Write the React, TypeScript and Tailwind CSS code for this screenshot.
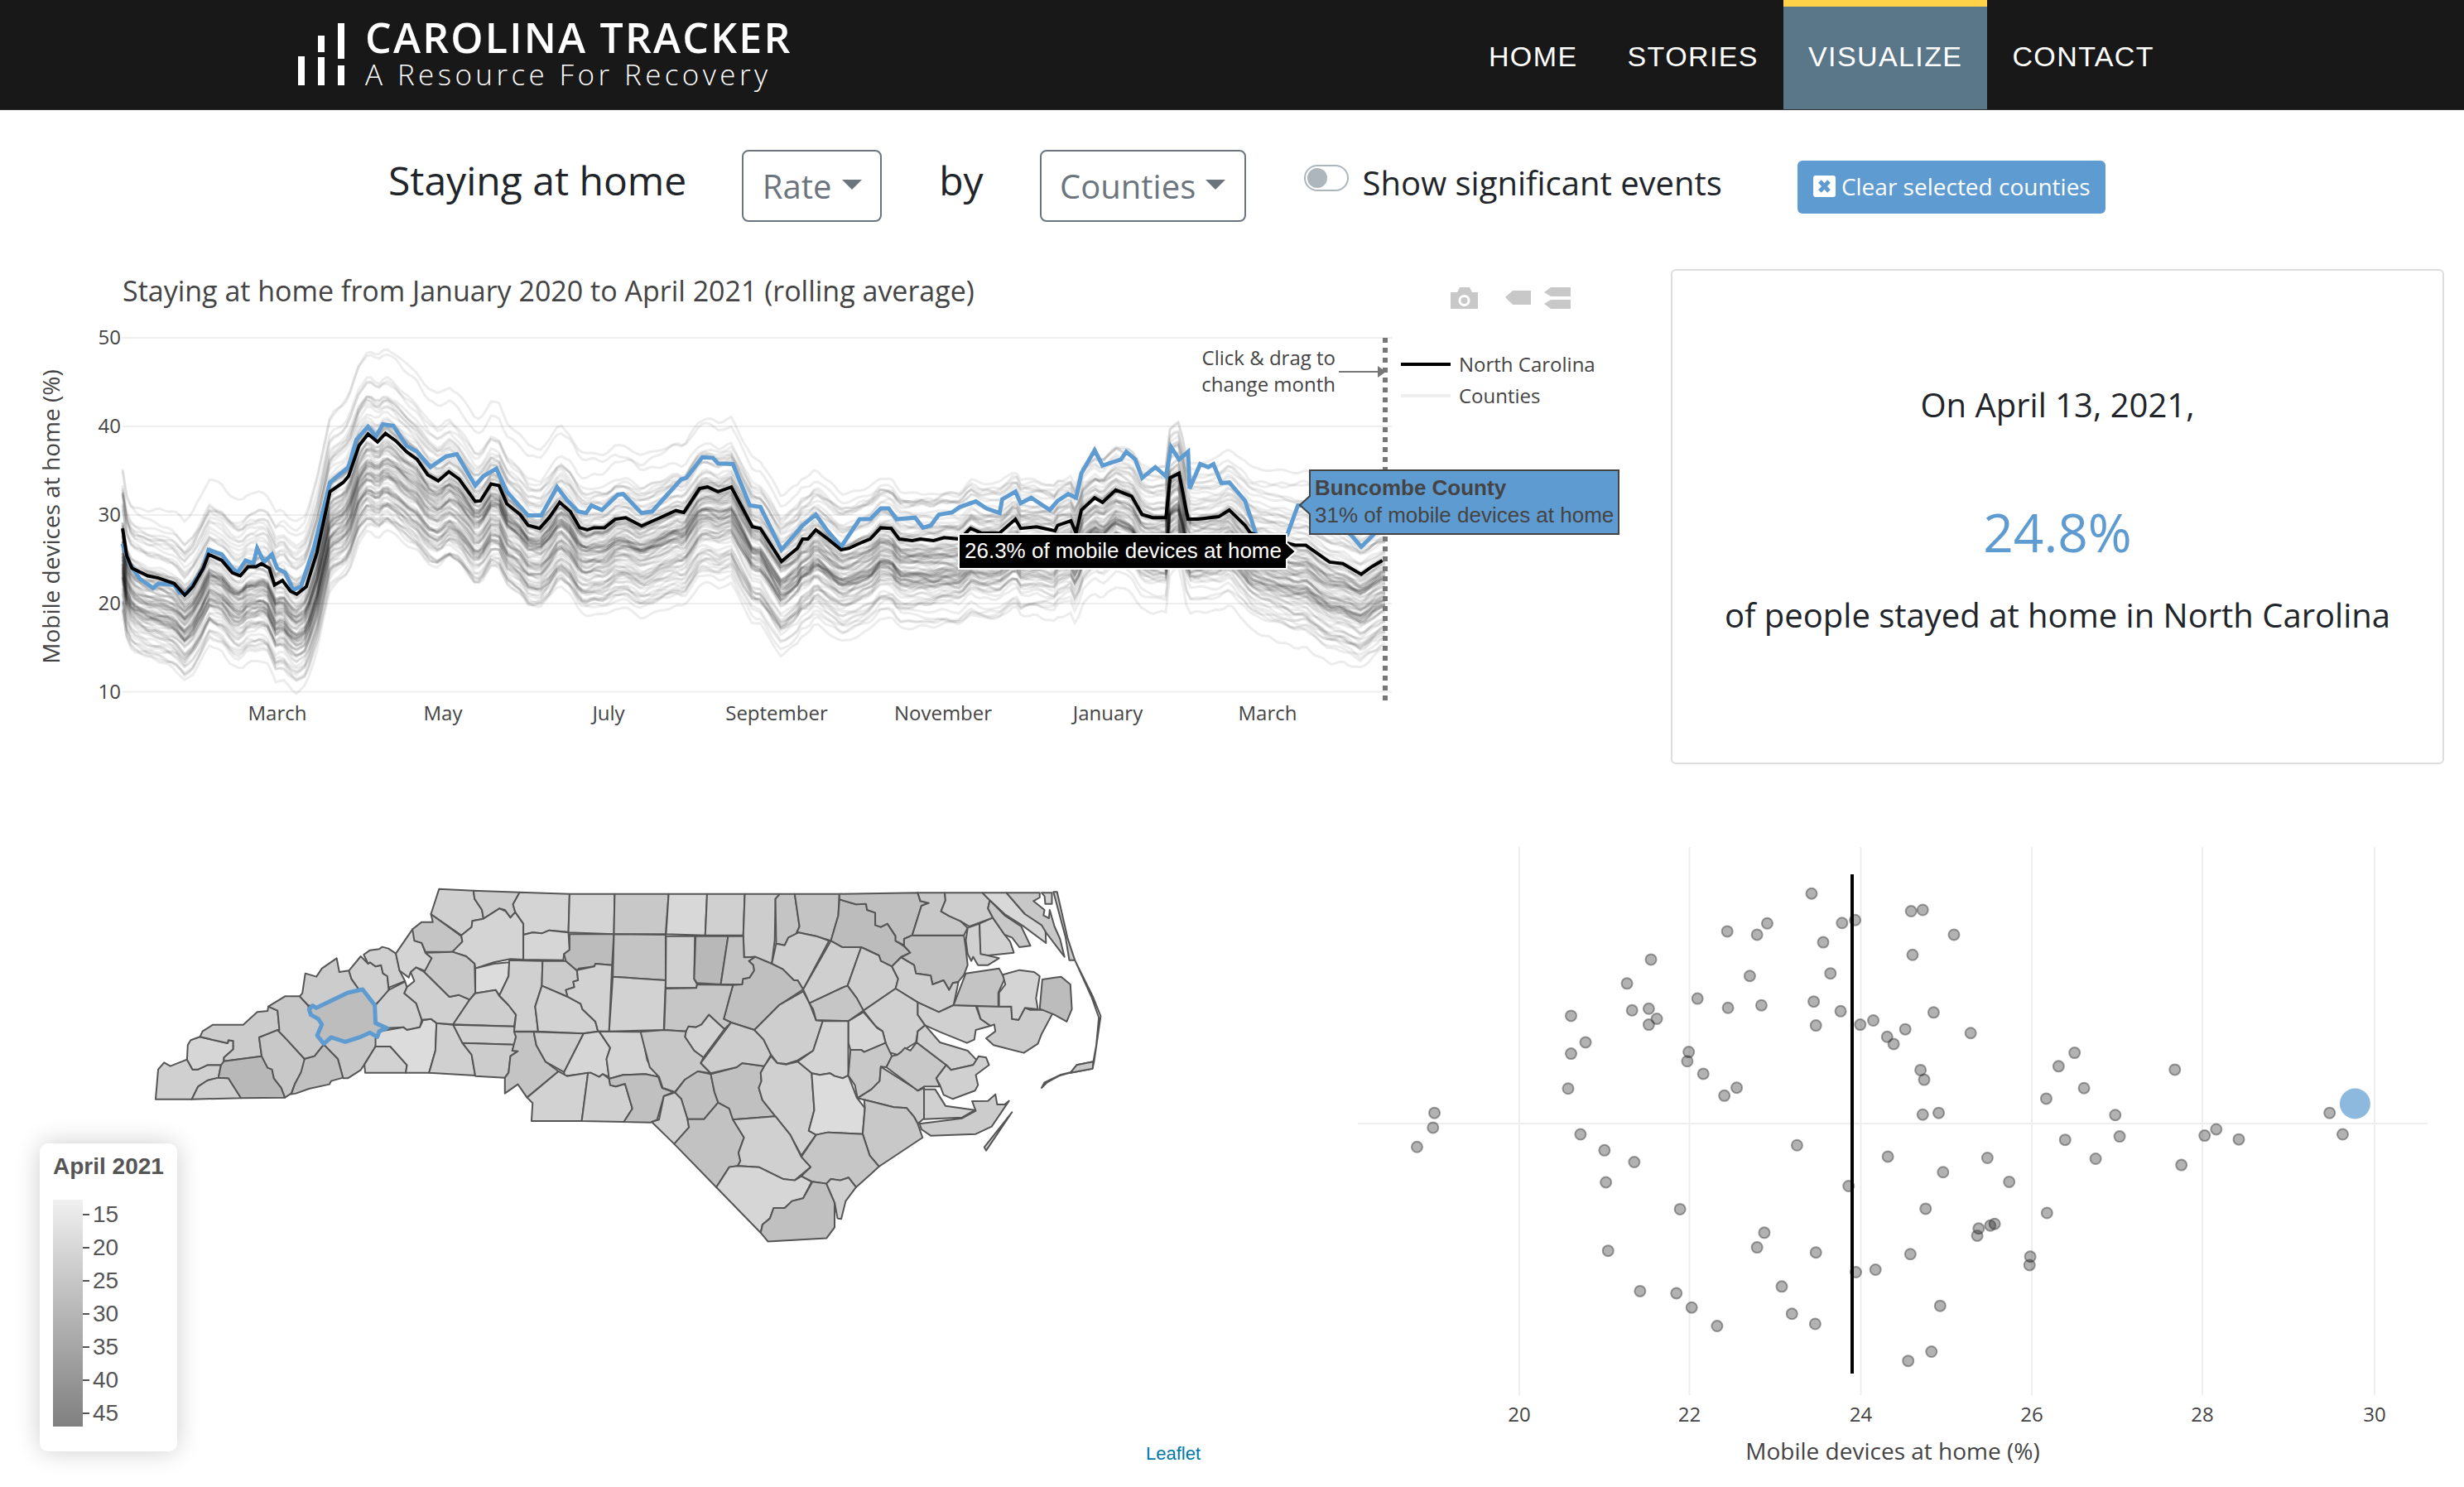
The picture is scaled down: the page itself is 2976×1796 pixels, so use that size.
const Z5 = [
  ["#d0d0d0", "85,836 92,728 108,703 125,716 170,692 185,728 200,728 225,712 262,712 255,758 225,768 200,790 183,836"],
  ["#cfcfcf", "183,836 200,790 225,768 255,758 282,760 316,832"],
  ["#d6d6d6", "170,692 172,640 180,622 205,610 280,633 282,622 295,625 295,655 270,685 268,712 225,712 200,728 185,728"],
  ["#cccccc", "205,610 212,590 240,566 322,566 360,520 388,516 390,500 415,515 420,585 365,612 372,680 270,698 270,685 295,655 295,625 282,622 280,633"],
  ["#b8b8b8", "270,698 372,680 388,722 400,728 405,760 425,795 435,830 316,832 282,760 255,758 262,712"],
  ["#c8c8c8", "365,612 415,585 440,620 488,690 488,725 478,740 462,780 452,815 435,830 425,795 405,760 400,728 388,722 372,680"],
  ["#c8c8c8", "390,500 435,463 475,463 497,495 505,530 525,550 535,565 522,605 540,638 515,680 488,690 440,620 415,585 420,585 415,515"],
  ["#cccccc", "475,463 482,452 490,380 520,392 535,362 575,325 582,375 608,370 615,400 635,438 605,450 520,505 497,495"],
  ["#d0d0d0", "608,370 640,318 660,345 665,340 680,355 695,350 700,380 712,390 716,440 700,470 678,495 645,438 635,438 615,400"],
  ["#d0d0d0", "648,312 665,296 690,292 698,284 715,290 735,308 745,370 760,408 718,430 716,440 712,390 700,380 695,350 680,355 665,340 660,345"],
  ["#d0d0d0", "680,495 716,440 760,410 765,430 758,452 790,488 805,548 800,575 765,585 755,575 710,578 680,560"],
  ["#c8c8c8", "540,638 560,612 598,628 640,610 665,595 685,610 680,645 650,710 640,730 605,760 592,760 578,690"],
  ["#c0c0c0", "540,638 578,690 592,758 560,770 555,782 500,798 465,815 452,818 462,780 478,740 488,690 515,680"],
  ["#d2d2d2", "680,645 720,645 765,712 762,740 652,740 650,710"],
  ["#dcdcdc", "680,615 690,590 755,575 765,585 800,575 808,550 830,545 845,560 842,660 825,740 762,740 765,712 720,645 680,645"],
  ["#d0d0d0", "845,560 890,566 915,632 940,675 950,750 825,740 842,660"],
  ["#d0d0d0", "790,358 812,375 880,465 905,458 935,475 890,565 845,560 830,545 805,548 790,488 758,452 765,430 785,408 775,375"],
  ["#d4d4d4", "780,220 805,270 815,305 832,325 815,372 790,358 775,375 770,395 745,370 735,308"],
  ["#c4c4c4", "780,220 805,194 835,194 830,165 912,245 915,265 888,302 815,302 805,270 785,262"],
  ["#d0d0d0", "852,74 945,80 948,110 968,150 972,182 942,190 940,212 912,242 830,165"],
  ["#cccccc", "945,80 1070,86 1052,130 1058,158 1045,178 1030,150 1015,145 972,182 968,150 948,110"],
  ["#d4d4d4", "972,182 1015,145 1032,155 1045,178 1058,158 1080,200 1080,330 1045,328 1000,340 950,362 948,345 925,318 888,302 915,265 912,242 940,212 942,190"],
  ["#c8c8c8", "815,305 888,302 925,318 948,345 950,450 935,475 905,458 880,465 812,375 832,325"],
  ["#dcdcdc", "950,362 1000,345 1042,340 1040,390 1015,460 1005,440 950,452"],
  ["#cecece", "950,452 1005,440 1015,462 1040,495 1060,530 1055,572 890,565 935,475"],
  ["#d0d0d0", "890,566 1055,572 1060,610 1055,638 915,632"],
  ["#cccccc", "915,632 1055,638 1050,660 1065,662 1045,680 1040,740 1030,758 950,752 940,675"],
  ["#d0d0d0", "1042,332 1132,335 1130,425 1112,500 1120,590 1055,590 1060,530 1040,495 1015,460 1040,390"],
  ["#d4d4d4", "1070,86 1205,92 1202,230 1150,224 1130,235 1105,232 1080,240 1080,200 1058,158 1052,130"],
  ["#d6d6d6", "1080,240 1105,232 1130,235 1150,224 1202,232 1205,295 1190,310 1188,332 1080,330"],
  ["#cbcbcb", "1132,335 1195,335 1225,370 1228,405 1215,410 1218,430 1195,440 1200,465 1130,425"],
  ["#d2d2d2", "1130,425 1200,465 1235,490 1240,510 1275,555 1282,590 1240,598 1120,590 1112,500"],
  ["#d4d4d4", "1205,92 1327,92 1325,238 1202,232"],
  ["#c8c8c8", "1327,92 1473,92 1465,238 1325,238"],
  ["#bcbcbc", "1205,238 1325,238 1320,350 1275,345 1272,355 1230,362 1225,370 1195,335 1190,310 1205,295"],
  ["#d2d2d2", "1225,368 1272,355 1275,345 1320,350 1312,590 1282,590 1275,555 1240,510 1235,490 1200,465 1195,440 1218,430 1215,410 1228,405"],
  ["#c4c4c4", "1325,238 1465,240 1465,405 1322,392"],
  ["#d2d2d2", "1322,392 1465,405 1460,585 1312,590"],
  ["#c4c4c4", "1055,592 1108,592 1115,640 1140,700 1175,735 1090,830 1065,782 1030,815 1030,758 1040,740 1045,680 1065,662 1050,660 1060,610"],
  ["#cecece", "1108,592 1243,598 1190,738 1140,700 1115,640"],
  ["#d6d6d6", "1243,598 1285,590 1315,650 1305,690 1312,755 1295,745 1285,755 1262,740 1192,752 1190,738"],
  ["#d2d2d2", "1090,830 1175,735 1198,752 1255,740 1238,915 1102,915 1105,850"],
  ["#d0d0d0", "1255,740 1262,740 1285,755 1295,745 1312,762 1315,785 1330,790 1355,780 1365,825 1375,870 1352,918 1238,915"],
  ["#d4d4d4", "1285,590 1400,592 1415,695 1445,755 1410,745 1350,748 1312,762 1305,690 1315,650"],
  ["#c0c0c0", "1312,762 1350,748 1410,745 1445,755 1455,795 1487,810 1460,825 1442,910 1425,920 1352,918 1375,870 1365,825 1355,780 1330,790 1315,785"],
];

const Z6 = [
  ["#d8d8d8", "241,92 345,92 340,242 234,238"],
  ["#d0d0d0", "345,92 447,92 443,242 340,242"],
  ["#cdcdcd", "447,92 542,92 530,110 528,260 520,345 475,320 445,322 443,242"],
  ["#c4c4c4", "530,110 542,92 582,92 595,210 585,240 565,250 555,278 532,272"],
  ["#c4c4c4", "582,92 703,92 700,170 680,262 640,245 592,232 585,240 595,210"],
  ["#cfcfcf", "532,272 555,278 565,250 592,232 640,245 675,262 605,438 590,405 580,405 550,365 520,345"],
  ["#bcbcbc", "703,112 748,130 775,128 778,150 800,160 800,205 815,212 833,200 855,245 855,262 878,282 895,305 870,320 845,355 815,335 810,315 762,285 710,285 680,262 700,170"],
  ["#c0c0c0", "703,92 915,88 922,118 945,125 925,135 900,242 878,255 878,278 855,262 855,245 833,200 815,212 800,205 800,160 778,150 775,128 748,130 703,112"],
  ["#c0c0c0", "900,242 1040,242 1045,290 1050,350 1040,385 1025,410 1010,415 1000,440 985,405 955,420 950,388 910,380 905,350 870,322 895,305 878,280 878,255"],
  ["#c8c8c8", "915,88 988,88 990,115 978,155 1000,172 1030,190 1050,215 1040,242 900,242 925,135 945,125 922,118"],
  ["#d0d0d0", "1050,215 1082,200 1085,290 1105,315 1135,325 1105,350 1078,350 1065,320 1060,335 1050,310 1045,260"],
  ["#d2d2d2", "1082,200 1118,178 1150,240 1165,265 1175,305 1105,315 1085,310"],
  ["#cecece", "988,88 1090,88 1110,115 1105,145 1118,178 1055,210 1030,190 1000,172 978,155 990,115"],
  ["#c8c8c8", "1110,115 1150,170 1195,210 1220,280 1190,285 1170,250 1150,240 1118,178 1105,145"],
  ["#d8d8d8", "1090,88 1155,88 1205,165 1260,205 1262,270 1200,208 1150,165 1110,115"],
  ["#c8c8c8", "1155,88 1245,88 1245,105 1228,118 1258,150 1255,170 1270,180 1272,150 1285,210 1300,255 1312,320 1262,232 1250,205 1205,165"],
  ["#c8c8c8", "1282,85 1292,85 1320,250 1340,332 1325,332 1315,250"],
  ["#d0d0d0", "1250,88 1278,88 1278,128 1260,128 1258,100"],
  ["#bfbfbf", "475,320 520,345 550,365 580,405 590,405 605,438 540,495 473,585 410,558 390,545 405,470 415,422 440,420 442,400 460,395 472,370 470,350 458,335"],
  ["#d0d0d0", "234,245 312,245 310,400 318,420 316,433 233,433"],
  ["#b8b8b8", "314,245 402,245 382,420 318,415 310,400"],
  ["#c4c4c4", "402,245 443,245 445,322 475,320 458,335 470,350 472,370 460,395 442,400 440,420 382,420"],
  ["#c6c6c6", "233,435 316,433 318,420 415,422 405,470 390,545 410,558 392,582 350,530 330,565 315,575 295,572 288,590 229,585"],
  ["#d2d2d2", "288,590 295,572 315,575 330,565 350,530 392,582 335,685 310,660 285,610"],
  ["#c8c8c8", "165,592 229,585 288,590 285,610 310,660 335,685 328,705 355,742 320,735 285,765 258,810 225,795 215,755 190,720 180,670"],
  ["#c0c0c0", "258,812 285,765 320,735 355,745 365,810 375,848 337,908 292,908 275,835"],
  ["#d0d0d0", "195,918 215,910 228,825 258,812 275,835 292,908 296,938 256,998"],
  ["#c2c2c2", "256,998 296,938 292,908 337,908 375,848 405,870 415,910 445,975 430,1030 435,1060 428,1078 405,1082 370,1155"],
  ["#c0c0c0", "355,745 425,720 440,705 500,716 490,740 492,770 485,795 495,840 530,898 415,910 405,870 375,848 365,810"],
  ["#cdcdcd", "328,705 410,558 473,585 498,620 518,675 500,716 440,705 425,720 355,742"],
  ["#cecece", "473,585 540,495 605,445 622,488 640,550 658,553 632,660 590,695 560,708 535,705 518,675 498,620"],
  ["#cfcfcf", "605,438 680,262 710,285 762,285 725,425 714,430 622,488"],
  ["#cecece", "762,285 810,315 815,335 845,355 862,400 855,435 768,515 750,470 725,425"],
  ["#c6c6c6", "622,488 714,430 725,425 750,470 768,515 727,553 658,550 640,550 632,510"],
  ["#cecece", "845,355 870,322 905,350 910,380 950,388 955,420 985,405 1000,440 1010,415 1025,412 1012,495 972,520 915,485 855,435 862,400"],
  ["#d0d0d0", "768,515 855,435 915,485 915,530 935,568 915,590 910,630 870,665 860,675 835,665 820,590 800,570"],
  ["#d6d6d6", "768,520 805,578 820,590 828,632 770,665 762,657 733,657 727,630 727,553"],
  ["#d4d4d4", "658,553 727,553 727,630 727,750 712,760 690,752 678,742 650,748 628,742 590,700 632,660"],
  ["#d0d0d0", "500,716 518,680 535,705 560,710 590,700 628,742 635,875 620,950 640,965 600,1040 570,965 530,898 495,840 485,795 492,770 490,740"],
  ["#dcdcdc", "628,742 650,748 678,742 690,752 712,760 727,750 750,830 772,868 766,962 672,956 640,965 620,950 635,875"],
  ["#c8c8c8", "733,657 762,657 770,665 828,632 845,680 830,720 815,718 812,770 790,800 752,832 745,785 727,750"],
  ["#cccccc", "752,832 790,800 812,770 815,718 905,795 915,805 932,795 932,905 915,925 905,900 885,868 850,865 770,838"],
  ["#c8c8c8", "830,720 845,680 860,675 870,665 880,650 895,660 912,630 992,712 965,760 975,790 932,790 915,805"],
  ["#d0d0d0", "915,485 972,520 1012,495 1072,498 1085,545 1112,570 1072,585 1068,620 1048,632 975,592 935,568 915,530"],
  ["#cccccc", "1075,498 1168,500 1170,545 1188,548 1205,505 1218,512 1285,512 1250,600 1240,635 1202,668 1120,640 1100,615 1125,590 1122,565 1112,570 1085,545"],
  ["#c4c4c4", "1012,495 1045,380 1135,362 1150,400 1133,450 1133,500"],
  ["#d4d4d4", "1135,500 1135,450 1152,420 1145,385 1190,368 1230,375 1245,390 1235,470 1240,510 1205,505 1188,548 1170,545 1168,500"],
  ["#bcbcbc", "1252,402 1303,392 1328,420 1332,510 1318,555 1285,530 1245,508"],
  ["#d0d0d0", "935,568 975,630 1050,660 1075,695 1065,712 1005,730 992,712 912,630 915,590"],
  ["#d0d0d0", "1005,730 1065,712 1080,680 1100,685 1108,712 1072,748 1078,785 1070,805 1010,835 985,820 975,785 965,760 992,712"],
  ["#d0d0d0", "932,800 962,800 990,860 1070,875 1035,902 932,908"],
  ["#cccccc", "920,925 1035,905 1072,878 1062,843 1105,842 1125,818 1130,855 1150,855 1162,842 1115,935 1072,962 950,968 925,945"],
  ["#c8c8c8", "770,838 850,865 885,868 905,900 915,925 928,975 810,1080 785,1040 766,962 772,868"],
  ["#c6c6c6", "640,965 672,956 766,962 785,1040 810,1080 790,1105 748,1155 728,1120 705,1130 680,1125 668,1142 630,1135 600,1115 625,1082 600,1045"],
  ["#d0d0d0", "415,910 530,898 570,965 600,1045 625,1082 582,1130 550,1125 485,1082 428,1078 435,1060 430,1030 445,975"],
  ["#d6d6d6", "370,1155 405,1082 428,1078 485,1082 550,1125 582,1130 600,1115 628,1135 605,1195 575,1205 555,1230 525,1230 515,1268 495,1290 490,1320"],
  ["#c0c0c0", "490,1320 495,1290 515,1268 525,1230 555,1230 575,1205 605,1195 630,1135 668,1142 690,1210 690,1300 668,1340 510,1352"],
  ["#d0d0d0", "668,1142 680,1125 705,1130 728,1120 748,1155 720,1205 708,1270 698,1268 690,1210"],
  ["#ffffff", "1340,332 1388,462 1410,535 1392,700 1388,725 1328,740 1300,750 1265,775 1250,795 1258,775 1300,748 1330,738 1345,712 1390,700 1398,640 1405,540 1385,465"],
  ["#c8c8c8", "1345,712 1390,700 1388,725 1328,740"],
  ["#d0d0d0", "1170,883 1095,1010 1100,1022"],
];

const BUNCOMBE = "520,505 605,450 645,438 678,495 680,560 710,578 690,590 685,610 665,595 640,610 598,628 560,612 540,635 522,605 535,565 525,545 505,530 500,510 510,497";

const NC_Z3 = [[232,860],[240,950],[250,990],[280,1015],[300,1022],[330,1040],[350,1078],[365,1050],[385,990],[395,945],[420,965],[440,1005],[455,1015],[470,985],[485,985],[495,975],[510,990],[520,1045],[535,1030],[550,1065],[562,1075],[580,1050],[600,940],[625,740],[650,710],[660,690],[680,590],[697,552],[715,578],[730,550],[750,575],[770,610],[790,635],[810,685],[830,705],[850,675],[870,700],[900,772],[910,770],[930,715],[945,720],[960,780],[985,815],[1000,850],[1022,860],[1040,825],[1060,775],[1080,805],[1098,858],[1112,865],[1125,858],[1145,858],[1165,830],[1185,825],[1215,852],[1250,825],[1280,802],[1295,808],[1325,730],[1340,725],[1360,740],[1385,725],[1405,790],[1425,855],[1440,860],[1480,968],[1510,925],[1520,895],[1530,895],[1545,865]];
const NC_Z4 = [[0,895],[25,930],[40,925],[65,905],[80,895],[100,858],[120,860],[135,895],[160,900],[175,895],[200,900],[220,890],[250,895],[270,860],[290,875],[325,875],[355,830],[365,860],[395,855],[430,868],[435,850],[460,835],[470,875],[480,800],[505,760],[520,775],[545,735],[575,755],[595,815],[615,825],[640,825],[648,695],[665,680],[682,830],[700,830],[740,822],[760,800],[790,850],[800,875],[840,895],[885,915],[905,915],[950,970],[975,975],[1010,1010],[1030,985],[1050,965]];
const BU_Z3 = [[232,910],[245,975],[265,1025],[290,1055],[300,1040],[330,1045],[340,1070],[355,1070],[385,990],[395,930],[420,945],[440,990],[450,1005],[465,965],[480,975],[487,925],[500,970],[515,945],[525,990],[540,1005],[555,1060],[570,1050],[595,920],[625,710],[660,660],[675,570],[697,528],[712,560],[725,520],[745,525],[770,590],[790,610],[815,660],[845,625],[865,618],[900,720],[915,690],[940,665],[960,740],[1000,818],[1025,818],[1055,725],[1075,770],[1095,805],[1110,810],[1120,785],[1140,800],[1170,750],[1180,748],[1215,810],[1235,805],[1290,700],[1300,695],[1330,628],[1350,630],[1360,648],[1388,650],[1420,785],[1440,790],[1480,930],[1520,850],[1545,815]];
const BU_Z4 = [[0,870],[25,920],[60,830],[80,830],[100,795],[115,795],[130,830],[165,825],[180,858],[195,850],[210,815],[235,808],[250,790],[280,772],[300,795],[325,810],[330,765],[355,740],[365,778],[385,760],[420,800],[435,770],[455,748],[470,760],[480,680],[505,605],[520,655],[555,635],[565,610],[582,635],[595,695],[620,660],[640,690],[650,595],[665,635],[682,610],[685,730],[705,650],[720,660],[730,650],[745,712],[760,710],[790,770],[810,875],[840,940],[870,880],[890,785],[900,785],[945,830],[990,880],[1010,920],[1025,895],[1050,850]];

const toReal = (z3: number[][], z4: number[][]) => [
  ...z3.map(([x, y]) => [x / 1.568, 320 + y / 2.703]),
  ...z4.map(([x, y]) => [1000 + x / 1.568, 320 + y / 2.703]),
];
const NC = toReal(NC_Z3, NC_Z4);
const BU = toReal(BU_Z3, BU_Z4);

const line = (pts: number[][]) => pts.map(([x, y]) => `${x.toFixed(1)},${y.toFixed(1)}`).join(" ");

const ncAt = (x: number) => {
  for (let i = 1; i < NC.length; i++) {
    if (x <= NC[i][0]) {
      const [x0, y0] = NC[i - 1];
      const [x1, y1] = NC[i];
      return y0 + ((y1 - y0) * (x - x0)) / (x1 - x0 || 1);
    }
  }
  return NC[NC.length - 1][1];
};

// county lines are NC plus a seeded offset and slow wobble
const makeCounties = () => {
  let s = 41;
  const rnd = () => {
    s = (s + 0x6d2b79f5) | 0;
    let t = Math.imul(s ^ (s >>> 15), 1 | s);
    t = (t + Math.imul(t ^ (t >>> 7), 61 | t)) ^ t;
    return ((t ^ (t >>> 14)) >>> 0) / 4294967296;
  };
  const out: string[] = [];
  for (let c = 0; c < 100; c++) {
    const g = (rnd() + rnd() + rnd() + rnd() - 2) * 0.7;
    // a few outliers well above and below the pack
    const o = c < 7 ? -0.35 - rnd() * 0.5 : c < 12 ? 0.8 + rnd() * 0.3 : Math.max(-0.5, Math.min(0.95, g + 0.4));
    const drift = { l: 120 + rnd() * 200, p: rnd() * 6.28 };
    const waves = [0, 1, 2, 3].map((k) => ({
      a: k === 3 ? 1.5 : 2 + rnd() * 6,
      l: k === 3 ? 3 + rnd() * 3 : 30 + rnd() * 120,
      p: rnd() * 6.28,
    }));
    const pts: number[][] = [];
    for (let x = 148; x <= 1673; x += 5) {
      const spring = Math.exp(-Math.pow((x - 440) / 120, 2));
      const end = Math.exp(-Math.pow((x - 1600) / 90, 2));
      const spread = 82 + 22 * spring + 10 * end;
      const w = waves.reduce((sum, v) => sum + v.a * Math.sin(x / v.l + v.p), 0);
      const wander = 1 + 0.3 * Math.sin(x / drift.l + drift.p);
      pts.push([x, ncAt(x) + o * spread * wander + w]);
    }
    out.push(line(pts));
  }
  return out;
};
const COUNTIES = makeCounties();

const DOTS = [[670,158],[807,200],[823,197],[730,221],[712,228],[609,229],[554,248],[595,256],[866,256],[686,274],[809,304],[449,315],[696,348],[585,354],[416,372],[513,408],[673,415],[601,424],[555,430],[446,432],[423,436],[710,438],[838,441],[339,449],[457,456],[755,460],[446,470],[676,472],[737,470],[799,481],[889,490],[774,499],[783,516],[359,512],[339,539],[501,535],[499,557],[1032,537],[1010,569],[1170,577],[820,578],[825,601],[521,587],[567,620],[335,622],[1045,621],[550,639],[993,646],[151,680],[823,684],[845,680],[1088,685],[1383,680],[149,715],[1227,719],[1401,731],[1211,734],[352,731],[1094,736],[1019,744],[1258,743],[127,761],[650,757],[385,769],[775,784],[912,787],[1061,789],[426,797],[1179,804],[851,821],[387,845],[942,844],[721,854],[489,909],[827,908],[994,918],[922,944],[916,948],[900,955],[898,972],[605,965],[595,1000],[390,1008],[676,1012],[806,1016],[971,1022],[970,1042],[758,1053],[731,1059],[629,1093],[434,1104],[484,1109],[505,1143],[847,1139],[643,1158],[675,1182],[540,1187],[835,1248],[803,1270]];

const openSans = "font-['Open_Sans',sans-serif]";
const Logo = () => (
  <svg width="56" height="76" viewBox="360 28 56 76" className="shrink-0" fill="#fff">
    <rect x="360" y="68" width="8" height="35" />
    <rect x="384" y="43" width="8" height="20" />
    <rect x="384" y="69" width="8" height="34" />
    <rect x="408" y="28" width="8" height="43" />
    <rect x="408" y="79" width="8" height="24" />
  </svg>
);

const NavItem = ({ label, active }: { label: string; active?: boolean }) => (
  <div
    className={`flex h-[132px] items-center border-t-8 px-[30px] pb-[3px] text-[34px] tracking-[1.4px] text-white font-['Liberation_Sans',sans-serif] ${
      active ? "border-[#ffd24a] bg-[#5a7689]" : "border-transparent"
    }`}
  >
    {label}
  </div>
);

const Dropdown = ({ label, width }: { label: string; width: string }) => (
  <div className={`flex h-[87px] ${width} items-center justify-center gap-[12px] rounded-[8px] border-2 border-[#6c757d] text-[40px] text-[#6c757d]`}>
    {label}
    <span className="mt-[-4px] h-0 w-0 border-x-[12px] border-t-[12px] border-x-transparent border-t-[#6c757d]" />
  </div>
);

const LineChart = () => (
  <svg width="2000" height="580" viewBox="0 320 2000 580" className="shrink-0" fontFamily="'Open Sans',sans-serif">
    <text x="148" y="364" fontSize="34" fill="#444">Staying at home from January 2020 to April 2021 (rolling average)</text>
    {[408, 515, 622, 729, 835.5].map((y) => (
      <line key={y} x1="148" x2="1681" y1={y} y2={y} stroke="#eee" strokeWidth="2" />
    ))}
    {COUNTIES.map((p, i) => (
      <polyline key={i} points={p} fill="none" stroke="#000" strokeOpacity="0.075" strokeWidth="3" />
    ))}
    <polyline points={line(BU)} fill="none" stroke="#5e9bd1" strokeWidth="5" />
    <polyline points={line(NC)} fill="none" stroke="#000" strokeWidth="4" />
    <line x1="1673" x2="1673" y1="408" y2="846" stroke="#777" strokeWidth="6" strokeDasharray="6 6" />
    {[["50", 408], ["40", 515], ["30", 622], ["20", 729], ["10", 835.5]].map(([t, y]) => (
      <text key={t} x="146" y={Number(y) + 8} textAnchor="end" fontSize="24" fill="#444">{t}</text>
    ))}
    {[["March", 335], ["May", 535], ["July", 735], ["September", 938], ["November", 1139], ["January", 1338], ["March", 1531]].map(([t, x]) => (
      <text key={String(x)} x={x} y="870" textAnchor="middle" fontSize="24" fill="#444">{t}</text>
    ))}
    <text transform="translate(72 624) rotate(-90)" textAnchor="middle" fontSize="28" fill="#444">Mobile devices at home (%)</text>

    <text x="1613" y="441" textAnchor="end" fontSize="24" fill="#444">Click &amp; drag to</text>
    <text x="1613" y="473" textAnchor="end" fontSize="24" fill="#444">change month</text>
    <line x1="1617" x2="1666" y1="449" y2="449" stroke="#777" strokeWidth="2" />
    <polygon points="1674,449 1664,442 1664,456" fill="#777" />

    <line x1="1692" x2="1752" y1="440" y2="440" stroke="#000" strokeWidth="4" />
    <line x1="1692" x2="1752" y1="478" y2="478" stroke="#eee" strokeWidth="4" />
    <text x="1762" y="449" fontSize="24" fill="#444">North Carolina</text>
    <text x="1762" y="487" fontSize="24" fill="#444">Counties</text>

    {/* modebar */}
    <g fill="#c8c8c8">
      <path d="M1752 353h8l3-6h12l3 6h7v20h-33z M1768.500 356a7 7 0 1 0 .01 0z" fillRule="evenodd" />
      <circle cx="1768.500" cy="363" r="4" />
      <polygon points="1818,359 1827,351 1849,351 1849,368 1827,368" />
      <polygon points="1865,353 1873,347 1897,347 1897,358 1873,358" />
      <polygon points="1865,367 1873,362 1897,362 1897,373 1873,373" />
    </g>

    {/* hover labels */}
    <g fontFamily="'Liberation Sans',sans-serif">
      <polygon points="1158,645 1554,645 1554,656 1565,666 1554,676 1554,687 1158,687" fill="#000" stroke="#fff" strokeWidth="2" />
      <text x="1165" y="674" fontSize="26" fill="#fff">26.3% of mobile devices at home</text>
      <polygon points="1582,568 1955,568 1955,645 1582,645 1582,621 1570,610 1582,599" fill="#5e9bd1" stroke="#444" strokeWidth="2" />
      <text x="1588" y="598" fontSize="26" fontWeight="700" fill="#444">Buncombe County</text>
      <text x="1588" y="631" fontSize="26" fill="#444">31% of mobile devices at home</text>
    </g>
  </svg>
);

const NcMap = () => (
  <svg width="1600" height="896" viewBox="0 900 1600 896">
    <g transform="translate(150 1049) scale(0.4464 0.3333)">
      {Z5.map(([f, p], i) => (
        <polygon key={i} points={p} fill={f} stroke="#555" strokeWidth="2" strokeLinejoin="round" vectorEffect="non-scaling-stroke" />
      ))}
    </g>
    <g transform="translate(700 1049) scale(0.4464 0.3333)">
      {Z6.map(([f, p], i) => (
        <polygon key={i} points={p} fill={f} stroke="#555" strokeWidth="2" strokeLinejoin="round" vectorEffect="non-scaling-stroke" />
      ))}
    </g>
    <g transform="translate(150 1049) scale(0.4464 0.3333)">
      <polygon points={BUNCOMBE} fill="#bdbdbd" stroke="#5e9bd1" strokeWidth="5" strokeLinejoin="round" vectorEffect="non-scaling-stroke" />
    </g>
  </svg>
);

const Legend = () => (
  <div className="absolute left-[48px] top-[481px] h-[372px] w-[166px] rounded-[10px] bg-white pl-[16px] pt-[10px] text-[28px] leading-[36px] text-[#555] shadow-[0_0_30px_rgba(0,0,0,0.2)] font-['Liberation_Sans',sans-serif]">
    <div className="font-bold">April 2021</div>
    <div className="mt-[22px] flex">
      <div className="h-[274px] w-[36px] bg-gradient-to-b from-[#f0f0f0] to-[#808080]" />
      <div className="mt-[-2px] flex flex-col">
        {["15", "20", "25", "30", "35", "40", "45"].map((t) => (
          <div key={t} className="flex h-[40px] items-center">
            <span className="mr-[4px] h-[2px] w-[8px] bg-[#555]" />
            {t}
          </div>
        ))}
      </div>
    </div>
  </div>
);

const Scatter = () => (
  <svg width="1376" height="896" viewBox="1600 900 1376 896" className="shrink-0" fontFamily="'Open Sans',sans-serif">
    {[1835, 2040.5, 2247.5, 2454, 2660, 2868].map((x) => (
      <line key={x} x1={x} x2={x} y1="1023" y2="1685" stroke="#eee" strokeWidth="2" />
    ))}
    <line x1="1640" x2="2932" y1="1357" y2="1357" stroke="#eee" strokeWidth="2" />
    {DOTS.map(([x, y], i) => (
      <circle key={i} cx={1600 + x / 1.1395} cy={999 + y / 1.97} r="6.500" fill="#000" fillOpacity="0.3" stroke="#444" strokeOpacity="0.5" strokeWidth="2" />
    ))}
    <line x1="2237" x2="2237" y1="1056" y2="1659" stroke="#000" strokeWidth="4" />
    <circle cx={1600 + 1418 / 1.1395} cy={999 + 658 / 1.97} r="18.500" fill="#5e9bd1" fillOpacity="0.7" />
    {[["20", 1835], ["22", 2040.5], ["24", 2247.5], ["26", 2454], ["28", 2660], ["30", 2868]].map(([t, x]) => (
      <text key={t} x={x} y="1717" textAnchor="middle" fontSize="24" fill="#444">{t}</text>
    ))}
    <text x="2286" y="1763" textAnchor="middle" fontSize="28" fill="#444">Mobile devices at home (%)</text>
  </svg>
);

export default function App() {
  return (
    <div className={`h-[1796px] w-[2976px] overflow-hidden bg-white text-[#212529] ${openSans}`}>
      <nav className="flex h-[133px] items-start border-b border-[#333] bg-[#181818] pl-[360px] pr-[344px]">
        <div className="flex h-[132px] items-start pt-[28px]">
          <Logo />
          <div className="ml-[25px] mt-[-6px]">
            <div className="text-[50px] font-semibold leading-[46px] tracking-[2.200px] text-white">CAROLINA TRACKER</div>
            <div className="mt-[2px] text-[35px] font-light leading-[40px] tracking-[4.4px] text-white">A Resource For Recovery</div>
          </div>
        </div>
        <div className="ml-auto flex">
          <NavItem label="HOME" />
          <NavItem label="STORIES" />
          <NavItem label="VISUALIZE" active />
          <NavItem label="CONTACT" />
        </div>
      </nav>

      <section className="flex h-[187px] items-start pl-[469px]">
        <h1 className="mt-[52px] text-[48px] leading-[66px]">Staying at home</h1>
        <div className="ml-[67px] mt-[48px]"><Dropdown label="Rate" width="w-[169px]" /></div>
        <span className="ml-[69px] mt-[52px] text-[48px] leading-[66px]">by</span>
        <div className="ml-[68px] mt-[48px]"><Dropdown label="Counties" width="w-[249px]" /></div>
        <div className="ml-[70px] mt-[66px] flex h-[32px] w-[54px] items-center rounded-full border-2 border-[#adb5bd] pl-[2px]">
          <span className="h-[24px] w-[24px] rounded-full bg-[#adb5bd]" />
        </div>
        <span className="ml-[17px] mt-[61px] text-[40px] leading-[54px]">Show significant events</span>
        <button className="ml-[91px] mt-[61px] flex h-[64px] w-[372px] items-center gap-[7px] rounded-[6px] bg-[#5e9bd1] pb-[2px] pl-[19px] text-[28px] text-white">
          <svg width="27" height="26" viewBox="0 0 27 26">
            <rect width="27" height="26" rx="3" fill="#fff" />
            <path d="M8 7l11 12M19 7L8 19" stroke="#5e9bd1" strokeWidth="5" />
          </svg>
          Clear selected counties
        </button>
      </section>

      <section className="flex h-[580px] items-start">
        <LineChart />
        <div className="ml-[18px] mt-[5px] flex h-[598px] w-[934px] flex-col items-center rounded-[6px] border-2 border-[#ddd] pt-[132px] text-[40px] leading-[60px]">
          <div>On April 13, 2021,</div>
          <div className="mt-[84px] text-[64px] leading-[80px] text-[#5e9bd1]">24.8%</div>
          <div className="mt-[30px]">of people stayed at home in North Carolina</div>
        </div>
      </section>

      <section className="flex h-[896px]">
        <div className="relative h-[896px] w-[1600px] shrink-0">
          <NcMap />
          <Legend />
          <a className="absolute left-[1384px] top-[844px] text-[22px] leading-[24px] text-[#0078a8] font-['Liberation_Sans',sans-serif]">Leaflet</a>
        </div>
        <Scatter />
      </section>
    </div>
  );
}
